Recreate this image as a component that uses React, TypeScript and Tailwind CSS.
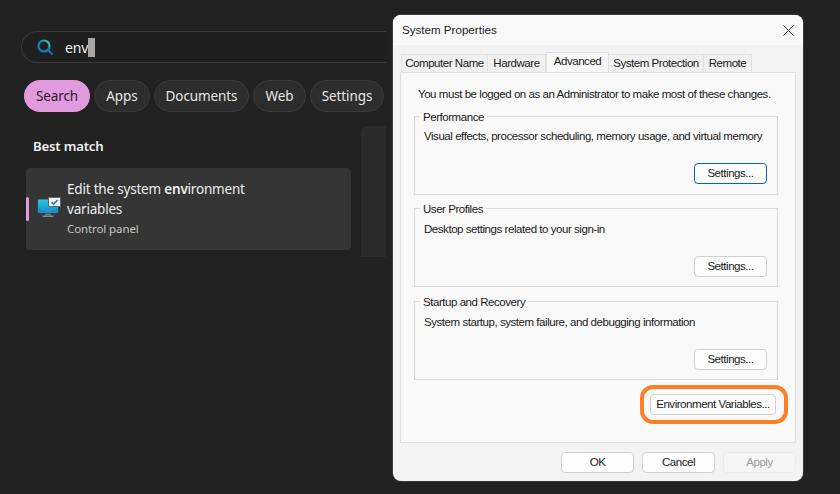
const seg = { fontFamily: '"Noto Sans", "Open Sans", sans-serif' };
const win = { fontFamily: '"Liberation Sans", Arial, sans-serif' };

function Chip({ label, active, w }: { label: string; active?: boolean; w: string }) {
  return (
    <div
      className={`${w} h-8 flex items-center justify-center rounded-full text-[13.5px] tracking-[-0.1px] ${
        active ? "bg-[#e29ade] text-[#2a1a2a]" : "bg-[#2d2d2d] border border-[#3a3a3a] text-[#e6e6e6]"
      }`}
    >
      {label}
    </div>
  );
}

function Group({ title, text, mt, textMt, mb, focus }: { title: string; text: string; mt: string; textMt: string; mb: string; focus?: boolean }) {
  return (
    <div className={`relative h-[79px] ${mt} ml-[13px] w-[364px] border border-[#dcdcdc] flex flex-col`}>
      <span className="absolute -top-[8px] left-[5px] bg-[#f9f9f9] px-[3px] leading-4 text-[11.5px] tracking-[-0.45px] text-[#1a1a1a] whitespace-nowrap">
        {title}
      </span>
      <p className={`ml-[9px] ${textMt} leading-4 text-[11.5px] tracking-[-0.45px] text-[#1a1a1a] whitespace-nowrap`}>{text}</p>
      <div className={`mt-auto ${mb} mr-[10px] self-end`}>
        <button
          className={`w-[73px] h-[21px] bg-[#fdfdfd] rounded-[4px] border text-[11.5px] tracking-[-0.45px] text-[#1a1a1a] flex items-center justify-center ${
            focus ? "border-[#0067c0]" : "border-[#d0d0d0]"
          }`}
        >
          Settings...
        </button>
      </div>
    </div>
  );
}

export default function App() {
  return (
    <div className="relative w-[840px] h-[494px] bg-[#212121] overflow-hidden" style={seg}>
      {/* Left: Search */}
      <div className="w-[386px] pt-[31px] pl-[21px]">
        <div className="w-[365px] h-[32px] rounded-l-full border border-r-0 border-[#3a3a3a] bg-[#1f1f1f] flex items-center">
          <svg className="ml-[15px]" width="16" height="17" viewBox="0 0 16 17" fill="none">
            <defs>
              <linearGradient id="g" x1="0" y1="1" x2="1" y2="0">
                <stop offset="0" stopColor="#0a78d4" />
                <stop offset="0.6" stopColor="#0f8fb5" />
                <stop offset="1" stopColor="#54d68a" />
              </linearGradient>
            </defs>
            <circle cx="7" cy="7" r="5.5" stroke="url(#g)" strokeWidth="2.2" />
            <path d="M11 11L15 15" stroke="#0a78d4" strokeWidth="2" strokeLinecap="round" />
          </svg>
          <span className="ml-[12px] text-[14px] tracking-[-0.1px] text-[#eeeeee]">env</span>
          <span className="w-[7px] h-[19px] bg-[#a6a6a6]" />
        </div>
        <div className="flex gap-[4px] mt-[17px] ml-[3px]">
          <Chip label="Search" active w="w-[66px]" />
          <Chip label="Apps" w="w-[56px]" />
          <Chip label="Documents" w="w-[95px]" />
          <Chip label="Web" w="w-[53px]" />
          <Chip label="Settings" w="w-[74px]" />
        </div>
        <div className="flex mt-[14px]">
          <div className="w-[340px] ml-[5px]">
            <div className="ml-[7px] mt-[10px] leading-5 text-[13.2px] font-semibold tracking-[-0.2px] text-[#f0f0f0]">
              Best match
            </div>
            <div className="relative mt-[12px] h-[82px] w-[325px] rounded-[4px] bg-[#353535] flex">
              <span className="absolute left-0 top-[29px] w-[3px] h-[24px] rounded-sm bg-[#e29ade]" />
              <svg className="ml-[11px] mt-[29px]" width="24" height="22" viewBox="0 0 24 22">
                <defs>
                  <linearGradient id="s" x1="0" y1="0" x2="0" y2="1">
                    <stop offset="0" stopColor="#2ec8dc" />
                    <stop offset="1" stopColor="#1487cc" />
                  </linearGradient>
                </defs>
                <rect x="0.5" y="2" width="21" height="14.5" fill="url(#s)" stroke="#333d44" />
                <rect x="8" y="16.5" width="6" height="2" fill="#6a7075" />
                <rect x="5.5" y="18.5" width="11" height="1.5" fill="#8b9094" />
                <rect x="11.5" y="0.5" width="12" height="9" fill="#f5f5f5" stroke="#666" />
                <path d="M14.5 5l2 2 4-4" stroke="#1477d0" strokeWidth="1.6" fill="none" />
              </svg>
              <div className="ml-[6px] mt-[11px] w-[200px] text-[#eeeeee]">
                <div className="leading-[20px] text-[13.5px] tracking-[-0.2px]">
                  Edit the system <b className="font-semibold">env</b>ironment
                </div>
                <div className="leading-[20px] text-[13.5px] tracking-[-0.2px]">variables</div>
                <div className="leading-[20px] text-[11.5px] tracking-[-0.1px] text-[#c4c4c4]">Control panel</div>
              </div>
            </div>
          </div>
          <div className="ml-[-5px] w-[25px] h-[131px] rounded-tl-lg bg-[#2b2b2b]" />
        </div>
      </div>

      {/* Dialog window */}
      <div
        className="absolute left-[393px] top-[15px] w-[410px] h-[466px] rounded-lg bg-[#f3f3f3] flex flex-col shadow-[0_0_0_1px_#3a3a3a]"
        style={win}
      >
        <div className="h-[30px] shrink-0 rounded-t-lg bg-[#f9f9f9] flex items-center justify-between pl-[9px] pr-[9px]">
          <span className="text-[11.6px] text-[#1a1a1a]">System Properties</span>
          <svg width="11" height="11" viewBox="0 0 11 11" stroke="#222" strokeWidth="1">
            <path d="M0.5 0.5L10.5 10.5M10.5 0.5L0.5 10.5" />
          </svg>
        </div>
        <div className="flex mt-[9px] ml-[8px] h-[18px] items-end text-[11.5px] tracking-[-0.45px] text-[#1a1a1a] whitespace-nowrap">
          <div className="w-[87px] h-[18px] bg-[#f0f0f0] border border-b-0 border-[#e0e0e0] flex items-center justify-center">Computer Name</div>
          <div className="w-[58px] h-[18px] bg-[#f0f0f0] border-t border-r border-[#e0e0e0] flex items-center justify-center">Hardware</div>
          <div className="w-[63px] h-[20px] bg-[#f9f9f9] border border-b-0 border-[#e0e0e0] flex items-center justify-center pb-[1px]">Advanced</div>
          <div className="w-[95px] h-[18px] bg-[#f0f0f0] border-t border-r border-[#e0e0e0] flex items-center justify-center">System Protection</div>
          <div className="w-[48px] h-[18px] bg-[#f0f0f0] border-t border-r border-[#e0e0e0] flex items-center justify-center">Remote</div>
        </div>
        <div className="mx-[7px] h-[371px] shrink-0 bg-[#f9f9f9] border border-[#e0e0e0] flex flex-col">
          <p className="ml-[17px] mt-[13px] leading-4 text-[11.5px] tracking-[-0.45px] text-[#1a1a1a] whitespace-nowrap">
            You must be logged on as an Administrator to make most of these changes.
          </p>
          <Group focus mt="mt-[14px]" textMt="mt-[11px]" mb="mb-[10px]" title="Performance" text="Visual effects, processor scheduling, memory usage, and virtual memory" />
          <Group mt="mt-[13px]" textMt="mt-[12px]" mb="mb-[9px]" title="User Profiles" text="Desktop settings related to your sign-in" />
          <Group mt="mt-[14px]" textMt="mt-[12px]" mb="mb-[9px]" title="Startup and Recovery" text="System startup, system failure, and debugging information" />
          <div className="relative mt-[14px] mr-[19px] self-end">
            <button className="w-[126px] h-[21px] bg-[#fdfdfd] rounded-[4px] border border-[#d0d0d0] text-[11.5px] tracking-[-0.45px] text-[#1a1a1a] whitespace-nowrap flex items-center justify-center">
              Environment Variables...
            </button>
            <span className="absolute -left-[10px] -top-[9px] w-[148px] h-[39px] rounded-[13px] border-[4px] border-[#ff7f27]" />
          </div>
        </div>
        <div className="flex justify-end gap-[8px] mt-[9px] mr-[7px] text-[11.5px] tracking-[-0.45px]">
          <button className="w-[73px] h-[21px] bg-[#fdfdfd] rounded-[4px] border border-[#d0d0d0] text-[#1a1a1a]">OK</button>
          <button className="w-[73px] h-[21px] bg-[#fdfdfd] rounded-[4px] border border-[#d0d0d0] text-[#1a1a1a]">Cancel</button>
          <button className="w-[73px] h-[21px] bg-[#f5f5f5] rounded-[4px] border border-[#ebebeb] text-[#9a9a9a]">Apply</button>
        </div>
      </div>
    </div>
  );
}
